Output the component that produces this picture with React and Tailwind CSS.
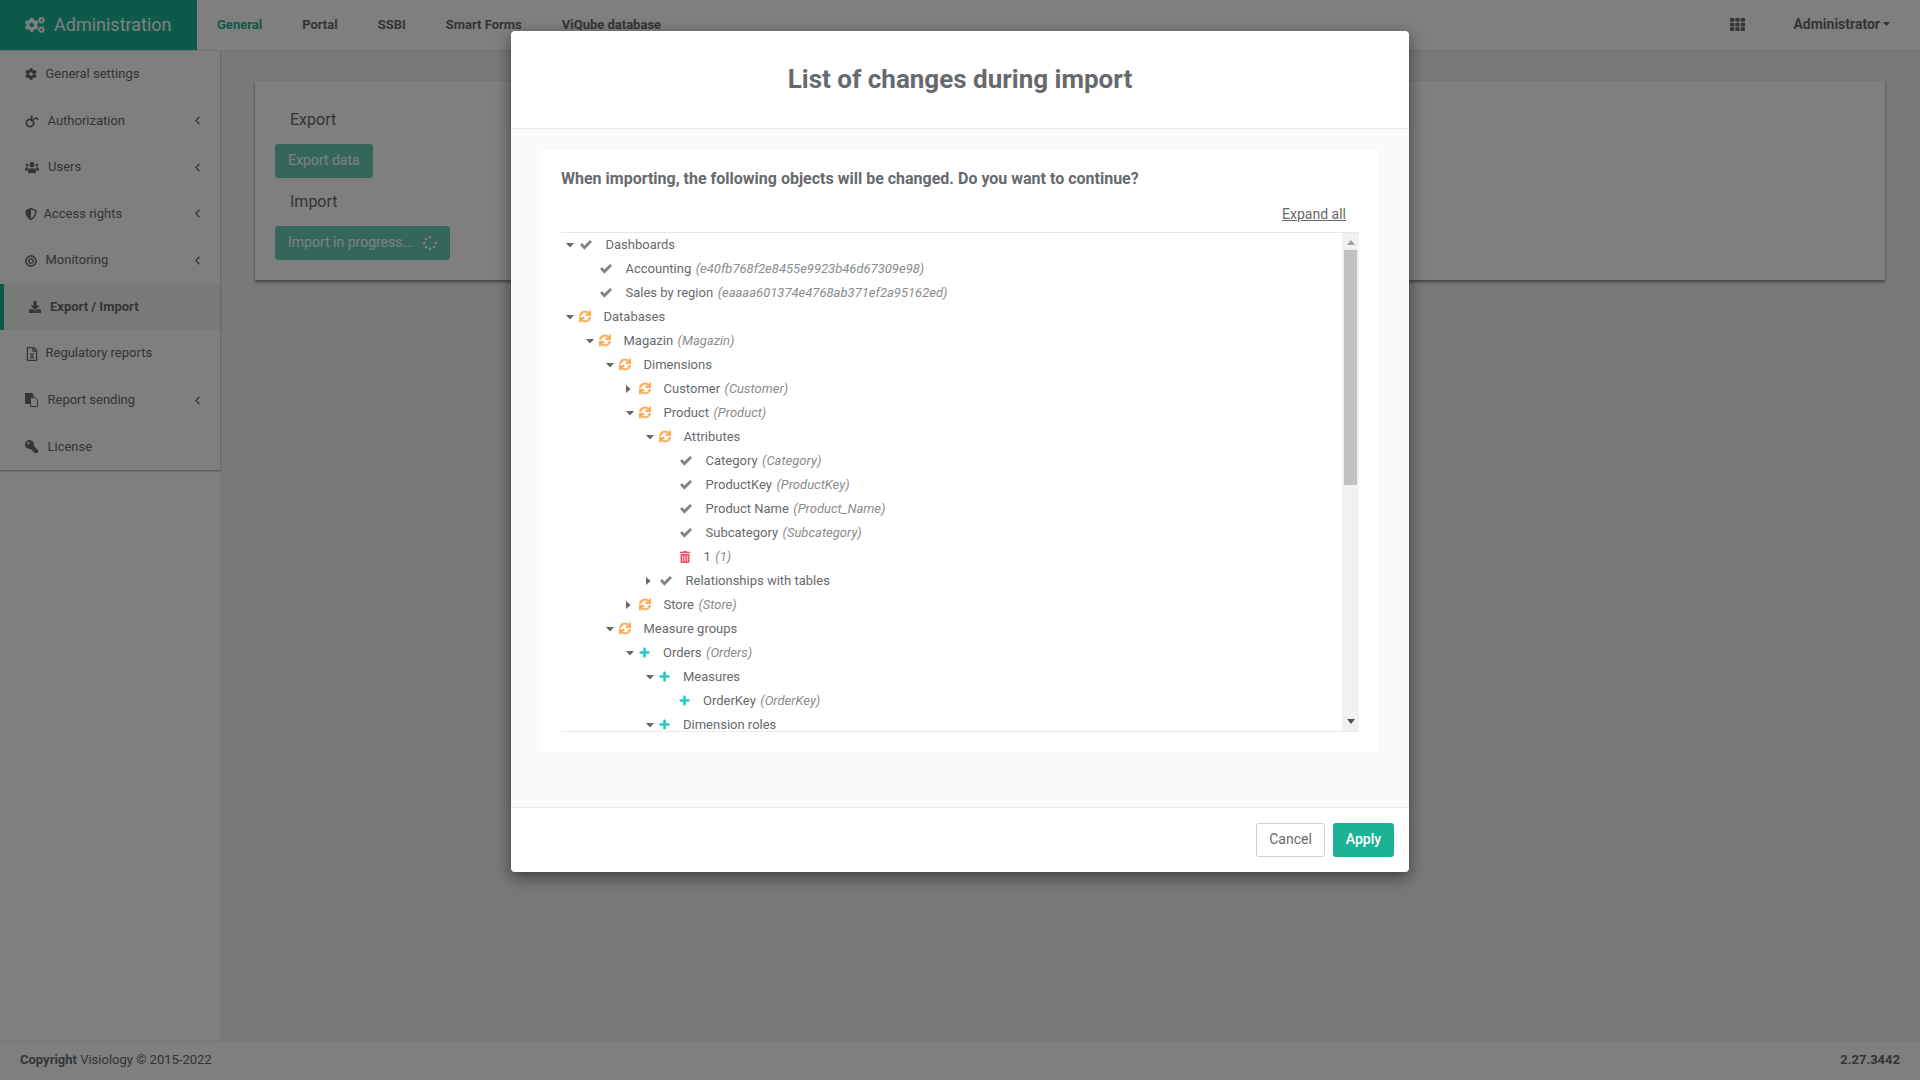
import React from "react";
import { FaSync, FaPlus, FaTrashAlt, FaCog, FaCogs, FaUsers, FaShieldAlt, FaBullseye, FaDownload, FaRegFileExcel, FaKey, FaTh, FaSpinner } from "react-icons/fa";

const AuthIcon = () => (
  <svg width="14" height="14" viewBox="0 0 14 14" fill="none" stroke="currentColor" strokeWidth="1.8">
    <circle cx="5" cy="9" r="3.7" />
    <path d="M6.6 1.5v6" />
    <path d="M8.5 5.5l2.2 -1.6l2.8 1.6" strokeWidth="1.5" />
  </svg>
);

const FilesIcon = () => (
  <svg width="13" height="14" viewBox="0 0 13 14" className="block">
    <path d="M0 0H7L8.5 1.5V4H5V11H0Z" fill="currentColor" />
    <path d="M5.5 4.5H10L12.5 7V13.5H5.5Z" fill="none" stroke="currentColor" strokeWidth="1" />
  </svg>
);

const Chevron = () => (
  <svg width="5" height="9" viewBox="0 0 5 9" fill="none" stroke="currentColor" strokeWidth="1.3" className="ml-auto">
    <path d="M4.5 0.7L0.8 4.5L4.5 8.3" />
  </svg>
);

const Check = () => (
  <svg width="12" height="10" viewBox="0 0 12 10" fill="currentColor" className="block">
    <path d="M0 5L2 3L4.4 5.4L10 0L12 2L4.4 9.8Z" />
  </svg>
);

const Triangle = ({ dir }) =>
  dir === "d" ? (
    <svg width="8" height="5" viewBox="0 0 8 5" fill="currentColor" className="block"><path d="M0 0H8L4 4.6Z" /></svg>
  ) : (
    <svg width="5" height="8" viewBox="0 0 5 8" fill="currentColor" className="block"><path d="M0 0V8L4.6 4Z" /></svg>
  );

const side = [
  { t: "General settings", i: <FaCog size={12} />, w: "w-[20.5px]" },
  { t: "Authorization", i: <AuthIcon />, w: "w-[22.5px]", c: 1 },
  { t: "Users", i: <FaUsers preserveAspectRatio="none" className="h-[13px] w-[14px]" />, w: "w-[23px]", c: 1 },
  { t: "Access rights", i: <FaShieldAlt size={12} />, w: "w-[18.5px]", c: 1 },
  { t: "Monitoring", i: <FaBullseye size={12} />, w: "w-[20.5px]", c: 1 },
  { t: "Export / Import", i: <FaDownload size={12} />, w: "w-[21px]", a: 1 },
  { t: "Regulatory reports", i: <FaRegFileExcel size={14} />, w: "w-[20.5px]" },
  { t: "Report sending", i: <FilesIcon />, w: "w-[22.5px]", c: 1 },
  { t: "License", i: <FaKey size={13} className="-scale-x-100" />, w: "w-[22.5px]" },
];

const tree = [
  [0, "d", "c", "Dashboards"],
  [1, "", "c", "Accounting", "e40fb768f2e8455e9923b46d67309e98"],
  [1, "", "c", "Sales by region", "eaaaa601374e4768ab371ef2a95162ed"],
  [0, "d", "r", "Databases"],
  [1, "d", "r", "Magazin", "Magazin"],
  [2, "d", "r", "Dimensions"],
  [3, "R", "r", "Customer", "Customer"],
  [3, "d", "r", "Product", "Product"],
  [4, "d", "r", "Attributes"],
  [5, "", "c", "Category", "Category"],
  [5, "", "c", "ProductKey", "ProductKey"],
  [5, "", "c", "Product Name", "Product_Name"],
  [5, "", "c", "Subcategory", "Subcategory"],
  [5, "", "t", "1", "1"],
  [4, "R", "c", "Relationships with tables"],
  [3, "R", "r", "Store", "Store"],
  [2, "d", "r", "Measure groups"],
  [3, "d", "p", "Orders", "Orders"],
  [4, "d", "p", "Measures"],
  [5, "", "p", "OrderKey", "OrderKey"],
  [4, "d", "p", "Dimension roles"],
];

const levelPad = ["pl-[5px]", "pl-[25px]", "pl-[45px]", "pl-[65px]", "pl-[85px]", "pl-[105px]"];

function NodeIcon({ k }) {
  if (k === "c") return <span className="flex w-[25.5px] shrink-0 text-[#838383]"><Check /></span>;
  if (k === "r") return <span className="-ml-[1px] flex w-[24.5px] shrink-0 -translate-y-[0.5px] text-[#f8ac59]"><FaSync size={12} stroke="currentColor" strokeWidth={24} /></span>;
  if (k === "p") return <span className="-ml-[1px] flex w-[24px] shrink-0 -translate-y-[1px] text-[#23c6c8]"><FaPlus size={11} stroke="currentColor" strokeWidth={24} /></span>;
  return <span className="-ml-[1px] flex w-[24.5px] shrink-0 text-[#ed5565]"><FaTrashAlt size={12} /></span>;
}

function Row({ r }) {
  const [lvl, car, k, name, id] = r;
  return (
    <div className={`flex h-[24px] shrink-0 items-center whitespace-nowrap ${levelPad[lvl]}`}>
      <span className="flex w-[14px] shrink-0 text-[#666]">
        {car === "d" && <Triangle dir="d" />}
        {car === "R" && <Triangle dir="r" />}
      </span>
      <NodeIcon k={k} />
      <span>{name}</span>
      {id && <i className="ml-[4.5px] text-[#8a8c8e]">({id})</i>}
    </div>
  );
}

export default function App() {
  return (
    <div className="relative flex h-screen flex-col overflow-hidden bg-[#f3f3f4] text-[13px] leading-[18.57px] text-[#676a6c] [font-family:Roboto,sans-serif]">
      <header className="flex h-[51px] shrink-0 items-start border-b border-[#e7eaec] bg-white">
        <div className="flex h-[50px] w-[197px] items-center bg-[#1ab394] pl-[25px] text-[18px] text-white">
          <FaCogs size={20} className="mr-[9px]" />
          <span>Administration</span>
        </div>
        <nav className="flex h-[50px] items-center font-bold">
          <a className="px-5 text-[#1ab394]">General</a>
          <a className="px-5">Portal</a>
          <a className="px-5">SSBI</a>
          <a className="px-5">Smart Forms</a>
          <a className="px-5">ViQube database</a>
        </nav>
        <div className="ml-auto flex h-[48px] items-center pr-[30px] text-[14px] font-bold">
          <FaTh size={15} className="mr-[48.7px]" />
          <span>Administrator</span>
          <span className="ml-[3px]">
            <svg width="7" height="4" viewBox="0 0 7 4" fill="currentColor" className="block"><path d="M0 0H7L3.5 4Z" /></svg>
          </span>
        </div>
      </header>

      <div className="flex min-h-0 flex-1">
        <aside className="w-[220px] shrink-0 bg-white">
          <ul className="shadow-[0_1px_2px_rgba(0,0,0,0.4)]">
            {side.map((s) => (
              <li key={s.t} className={s.a ? "flex items-center border-l-4 border-[#1ab394] bg-[#f3f3f4] py-[14px] pl-[25px] pr-[20px] font-bold" : "flex items-center py-[14px] pl-[25px] pr-[20px]"}>
                <span className={`flex shrink-0 ${s.w}`}>{s.i}</span>
                <span>{s.t}</span>
                {s.c && <Chevron />}
              </li>
            ))}
          </ul>
        </aside>

        <main className="flex-1 px-[35px] pt-[30px]">
          <section className="bg-white px-5 py-5 shadow-[0_2px_3px_rgba(0,0,0,0.45)]">
            <h3 className="mt-[1px] h-[36px] pl-[15px] text-[16px] leading-[36px]">Export</h3>
            <button className="mt-[6px] block h-[34px] rounded-[3px] bg-[#1ab394] px-[13px] pb-[1px] text-[14px] text-white opacity-65">Export data</button>
            <h3 className="mt-[6px] h-[36px] pl-[15px] text-[16px] leading-[36px]">Import</h3>
            <button className="mt-[6px] flex h-[34px] items-center rounded-[3px] bg-[#1ab394] px-[13px] pb-[1px] text-[14px] text-white opacity-65">
              Import in progress...
              <FaSpinner size={14} className="ml-[9px]" />
            </button>
          </section>
        </main>
      </div>

      <footer className="flex h-[39px] shrink-0 items-center justify-between border-t border-[#e7eaec] bg-white px-5 pb-[2px]">
        <span><b className="font-bold">Copyright</b> Visiology © 2015-2022</span>
        <b className="font-bold">2.27.3442</b>
      </footer>

      <div className="absolute inset-0 bg-black/50">
        <div className="mx-auto mt-[31px] flex h-[841px] w-[898px] flex-col rounded-[4px] bg-white shadow-[0_5px_15px_rgba(0,0,0,0.5)]">
          <div className="flex h-[98px] shrink-0 items-center justify-center border-b border-[#e7eaec]">
            <h2 className="text-[26px] font-bold">List of changes during import</h2>
          </div>
          <div className="h-[678px] shrink-0 bg-[#f8fafb] pl-[29px] pr-[30px] pt-[21px]">
            <div className="h-[602px] bg-white pl-[21px] pr-[20px] pt-[19px]">
              <p className="text-[16px] font-bold leading-[20px]">When importing, the following objects will be changed. Do you want to continue?</p>
              <div className="flex justify-end pr-[13px] pt-[16px] pb-[9px] text-[14px] leading-[18px]">
                <a className="underline">Expand all</a>
              </div>
              <div className="flex h-[500px] border-y border-[#e7eaec]">
                <div className="flex min-w-0 flex-1 flex-col overflow-hidden">
                  {tree.map((r) => <Row key={r[3] + r[0]} r={r} />)}
                </div>
                <div className="flex w-[17px] shrink-0 flex-col items-center bg-[#f1f1f1]">
                  <svg width="8" height="5" viewBox="0 0 8 5" fill="#a3a3a3" className="mt-[7px] block"><path d="M0 5H8L4 0Z" /></svg>
                  <div className="mt-[5px] h-[235px] w-[13px] bg-[#c1c1c1]" />
                  <svg width="8" height="5" viewBox="0 0 8 5" fill="#505050" className="mb-[7px] mt-auto block"><path d="M0 0H8L4 5Z" /></svg>
                </div>
              </div>
            </div>
          </div>
          <div className="flex flex-1 items-start justify-end gap-[8px] border-t border-[#e7eaec] pr-[15px] pt-[15px] text-[14px]">
            <button className="h-[34px] w-[69px] rounded-[3px] border border-[#d0d0d0] bg-white pb-[1px]">Cancel</button>
            <button className="h-[34px] w-[61px] rounded-[3px] bg-[#1ab394] pb-[1px] font-medium text-white">Apply</button>
          </div>
        </div>
      </div>
    </div>
  );
}
